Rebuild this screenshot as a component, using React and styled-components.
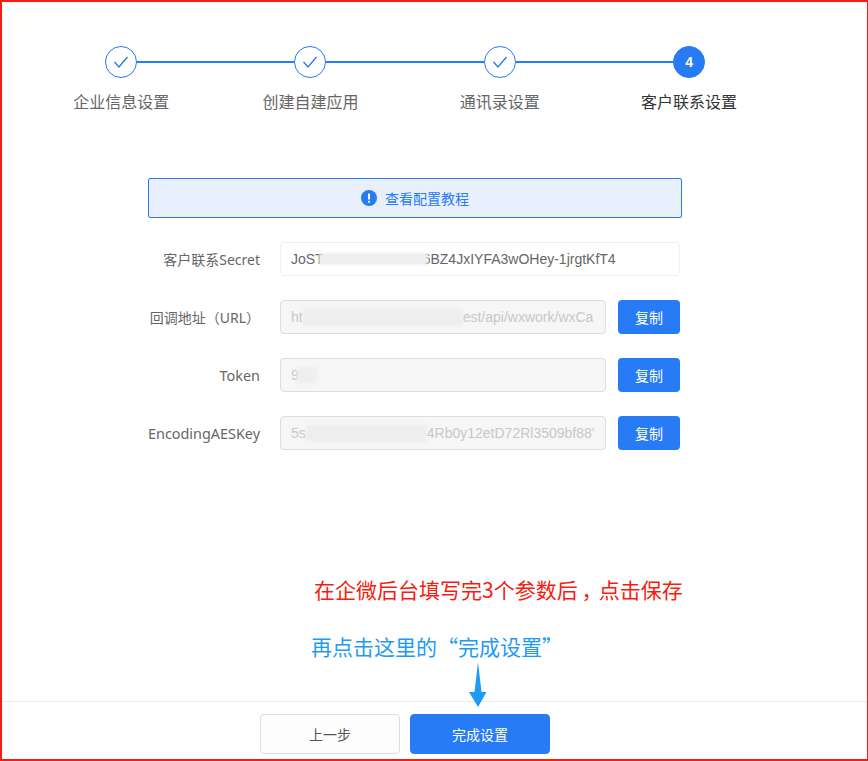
import React from "react";
import styled, { createGlobalStyle } from "styled-components";

const BLUE = "#277bf5";

const GlobalStyle = createGlobalStyle`
  html, body {
    margin: 0;
    padding: 0;
    background: #fff;
  }
  * {
    box-sizing: border-box;
  }
`;

const Page = styled.div`
  position: relative;
  width: 868px;
  height: 761px;
  border: solid #f61c10;
  border-width: 2px 1px 2px 2px;
  display: flex;
  flex-direction: column;
  overflow: hidden;
  font-family: "Noto Sans", "Noto Sans CJK SC", sans-serif;
`;

const Main = styled.main`
  flex: 1;
  padding-top: 44px;
`;

const Stepper = styled.ol`
  display: flex;
  list-style: none;
  margin: 0 0 0 24.5px;
  padding: 0;
`;

const Step = styled.li`
  position: relative;
  width: 189.3px;
  display: flex;
  flex-direction: column;
  align-items: center;
  &:not(:last-child)::after {
    content: "";
    position: absolute;
    top: 15px;
    left: calc(50% + 16px);
    width: calc(100% - 32px);
    height: 2px;
    background: ${BLUE};
  }
`;

const Mark = styled.div`
  width: 32px;
  height: 32px;
  border-radius: 50%;
  border: 1px solid ${BLUE};
  background: ${(p) => (p.$active ? BLUE : "#fff")};
  color: ${(p) => (p.$active ? "#fff" : BLUE)};
  font: bold 14px "Liberation Sans", sans-serif;
  display: flex;
  align-items: center;
  justify-content: center;
`;

const StepLabel = styled.div`
  margin-top: 12px;
  font-size: 16px;
  line-height: 24px;
  white-space: nowrap;
  color: ${(p) => (p.$active ? "#333" : "#666")};
`;

const Form = styled.section`
  width: 534px;
  margin: 64px 0 0 146px;
  display: flex;
  flex-direction: column;
`;

const Banner = styled.div`
  height: 40px;
  margin-bottom: 24px;
  border: 1px solid ${BLUE};
  border-radius: 2px;
  background: #e8f0fd;
  color: ${BLUE};
  font-size: 14px;
  display: flex;
  align-items: center;
  justify-content: center;
  gap: 8px;
`;

const Row = styled.div`
  display: flex;
  align-items: center;
  height: 34px;
  margin-bottom: 24px;
`;

const Label = styled.label`
  width: 112px;
  margin-right: 20px;
  font-size: ${(p) => (p.$latin ? "14.4px" : "14px")};
  color: #666;
  text-align: right;
  white-space: nowrap;
`;

const Field = styled.div`
  width: ${(p) => (p.$readOnly ? "326px" : "400px")};
  height: 34px;
  padding: 0 10px;
  border: 1px solid ${(p) => (p.$readOnly ? "#dcdcdc" : "#efefef")};
  border-radius: 4px;
  background: ${(p) => (p.$readOnly ? "#f6f6f6" : "#fff")};
  color: ${(p) => (p.$readOnly ? "#c6c8cc" : "#666")};
  font: 14px/32px "Liberation Sans", sans-serif;
  white-space: nowrap;
  overflow: hidden;
`;

const Smudge = styled.span`
  display: inline-block;
  vertical-align: middle;
  height: ${(p) => p.$h}px;
  margin: -2px ${(p) => p.$right || 0}px 0 ${(p) => p.$left || 0}px;
  background: #eeeeee;
  filter: blur(1.5px);
`;

const CopyButton = styled.button`
  width: 62px;
  height: 34px;
  margin-left: 12px;
  padding: 0;
  border: 0;
  border-radius: 4px;
  background: ${BLUE};
  color: #fff;
  font: 14px "Noto Sans CJK SC", sans-serif;
`;

const Footer = styled.footer`
  height: 58px;
  padding: 12px 0 0 258px;
  border-top: 1px solid #ebebeb;
  display: flex;
  gap: 10px;
`;

const FooterButton = styled.button`
  width: 140px;
  height: 40px;
  padding: 0;
  border: 1px solid ${(p) => (p.$primary ? BLUE : "#dcdcdc")};
  border-radius: 4px;
  background: ${(p) => (p.$primary ? BLUE : "#fdfdfd")};
  color: ${(p) => (p.$primary ? "#fff" : "#555")};
  font: 14px "Noto Sans CJK SC", sans-serif;
`;

const Note = styled.div`
  position: absolute;
  white-space: nowrap;
  font-size: 21px;
  line-height: 28px;
  font-family: "Noto Sans CJK SC", sans-serif;
  color: ${(p) => p.$color};
  left: ${(p) => p.$x}px;
  top: ${(p) => p.$y}px;
`;

// the comma sits in the middle of its cell in the picture
const Comma = styled.span`
  display: inline-block;
  width: 21px;
  text-align: center;
  font-feature-settings: "palt";
`;

const Arrow = styled.svg`
  position: absolute;
  left: 465px;
  top: 660px;
`;

const Check = () => (
  <svg width="16" height="16" viewBox="0 0 16 16" fill="none" stroke={BLUE} strokeWidth="1.4">
    <path d="M1.5 8 L6 13 L14.5 3" />
  </svg>
);

const Notice = () => (
  <svg width="16" height="16" viewBox="0 0 16 16">
    <circle cx="8" cy="8" r="8" fill={BLUE} />
    <rect x="7" y="3.5" width="2" height="6" rx="0.6" fill="#fff" />
    <rect x="7" y="10.8" width="2" height="2" rx="0.4" fill="#fff" />
  </svg>
);

const steps = ["企业信息设置", "创建自建应用", "通讯录设置", "客户联系设置"];

const fields = [
  { label: "回调地址（URL）", start: "ht", blur: 160, h: 18, end: "est/api/wxwork/wxCa" },
  { label: "Token", latin: true, start: "9", blur: 20, h: 16, left: -2 },
  { label: "EncodingAESKey", latin: true, start: "5s", blur: 121, h: 17, end: "4Rb0y12etD72Rl3509bf88'" },
];

export default function App() {
  return (
    <Page>
      <GlobalStyle />
      <Main>
        <Stepper>
          {steps.map((name, i) => {
            const active = i === steps.length - 1;
            return (
              <Step key={name}>
                <Mark $active={active}>{active ? i + 1 : <Check />}</Mark>
                <StepLabel $active={active}>{name}</StepLabel>
              </Step>
            );
          })}
        </Stepper>
        <Form>
          <Banner>
            <Notice />
            查看配置教程
          </Banner>
          <Row>
            <Label>客户联系Secret</Label>
            <Field>
              JoST
              <Smudge $h={12} $left={-5} $right={-5} style={{ width: 109 }} />
              6BZ4JxIYFA3wOHey-1jrgtKfT4
            </Field>
          </Row>
          {fields.map((f) => (
            <Row key={f.label}>
              <Label $latin={f.latin}>{f.label}</Label>
              <Field $readOnly>
                {f.start}
                <Smudge $h={f.h} $left={f.left} style={{ width: f.blur }} />
                {f.end}
              </Field>
              <CopyButton>复制</CopyButton>
            </Row>
          ))}
        </Form>
      </Main>
      <Footer>
        <FooterButton>上一步</FooterButton>
        <FooterButton $primary>完成设置</FooterButton>
      </Footer>
      <Note $color="#f61c10" $x={312} $y={573}>
        在企微后台填写完3个参数后<Comma>，</Comma>点击保存
      </Note>
      <Note $color="#1e9bf5" $x={309} $y={630}>再点击这里的“完成设置”</Note>
      <Arrow width="22" height="46" viewBox="0 0 22 46">
        <path d="M11 0 L14.5 30 L19.5 30 L11 45 L2 30 L7.5 30 Z" fill="#1e9bf5" />
      </Arrow>
    </Page>
  );
}
